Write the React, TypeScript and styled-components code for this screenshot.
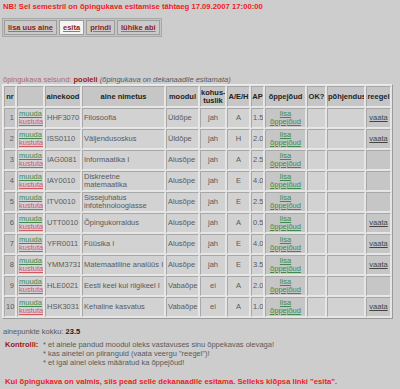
import React from 'react'
import styled, { createGlobalStyle } from 'styled-components'

const GlobalStyle = createGlobalStyle`
  html, body {
    margin: 0;
    padding: 0;
    background: #cdcdcd;
  }
  body {
    font-family: "Liberation Sans", Arial, sans-serif;
    font-size: 7.5px;
    color: #555;
  }
`

type Row = {
  nr: number
  kood: string
  nimi: React.ReactNode
  moodul: string
  kohus: string
  aeh: string
  ap: string
  reegel: boolean
}

const Rows: Row[] = [
  { nr: 1, kood: 'HHF3070', nimi: 'Filosoofia', moodul: 'Üldõpe', kohus: 'jah', aeh: 'A', ap: '1.5', reegel: true },
  { nr: 2, kood: 'ISS0110', nimi: 'Väljendusoskus', moodul: 'Üldõpe', kohus: 'jah', aeh: 'H', ap: '2.0', reegel: true },
  { nr: 3, kood: 'IAG0081', nimi: 'Informaatika I', moodul: 'Alusõpe', kohus: 'jah', aeh: 'A', ap: '2.5', reegel: false },
  { nr: 4, kood: 'IAY0010', nimi: <>Diskreetne<br />matemaatika</>, moodul: 'Alusõpe', kohus: 'jah', aeh: 'E', ap: '4.0', reegel: false },
  { nr: 5, kood: 'ITV0010', nimi: <>Sissejuhatus<br />infotehnoloogiasse</>, moodul: 'Alusõpe', kohus: 'jah', aeh: 'E', ap: '2.5', reegel: false },
  { nr: 6, kood: 'UTT0010', nimi: 'Õpingukorraldus', moodul: 'Alusõpe', kohus: 'jah', aeh: 'A', ap: '0.5', reegel: true },
  { nr: 7, kood: 'YFR0011', nimi: 'Füüsika I', moodul: 'Alusõpe', kohus: 'jah', aeh: 'E', ap: '4.0', reegel: true },
  { nr: 8, kood: 'YMM3731', nimi: 'Matemaatiline analüüs I', moodul: 'Alusõpe', kohus: 'jah', aeh: 'E', ap: '3.5', reegel: true },
  { nr: 9, kood: 'HLE0021', nimi: 'Eesti keel kui riigikeel I', moodul: 'Vabaõpe', kohus: 'ei', aeh: 'A', ap: '2.0', reegel: false },
  { nr: 10, kood: 'HSK3031', nimi: 'Kehaline kasvatus', moodul: 'Vabaõpe', kohus: 'ei', aeh: 'A', ap: '1.0', reegel: true }
]

// column widths (cell border boxes), spacing between them is 1px
const colWidths = [12, 27, 36, 83, 33, 26, 23, 13, 41, 19, 38, 25]

const App = () => {
  return (
    <Page>
      <GlobalStyle />
      <Deadline>NB! Sel semestril on õpingukava esitamise tähtaeg 17.09.2007 17:00:00</Deadline>
      <Toolbar>
        <ToolButton>lisa uus aine</ToolButton>
        <ToolButton active>esita</ToolButton>
        <ToolButton>prindi</ToolButton>
        <ToolButton>lühike abi</ToolButton>
      </Toolbar>
      <Status>
        <StatusLabel>õpingukava seisund:</StatusLabel> <StatusValue>pooleli</StatusValue>{' '}
        <StatusNote>(õpingukava on dekanaadile esitamata)</StatusNote>
      </Status>
      <PlanTable>
        <colgroup>
          {colWidths.map((w, i) => (
            <col key={i} style={{ width: w }} />
          ))}
        </colgroup>
        <thead>
          <tr>
            <Th>nr</Th>
            <Th></Th>
            <Th>ainekood</Th>
            <Th>aine nimetus</Th>
            <Th>moodul</Th>
            <Th>kohus-<br />tuslik</Th>
            <Th>A/E/H</Th>
            <Th>AP</Th>
            <Th>õppejõud</Th>
            <Th>OK?</Th>
            <Th>põhjendus</Th>
            <Th>reegel</Th>
          </tr>
        </thead>
        <tbody>
          {Rows.map((r) => (
            <tr key={r.nr}>
              <Td align="right" dark>{r.nr}</Td>
              <Td>
                <EditLink>muuda</EditLink>
                <br />
                <DeleteLink>kustuta</DeleteLink>
              </Td>
              <Td>{r.kood}</Td>
              <Td>{r.nimi}</Td>
              <Td>{r.moodul}</Td>
              <Td align="center">{r.kohus}</Td>
              <Td align="center">{r.aeh}</Td>
              <Td>{r.ap}</Td>
              <Td align="center" dark>
                <EditLink>lisa<br />õppejõud</EditLink>
              </Td>
              <Td></Td>
              <Td></Td>
              <Td align="center" dark>{r.reegel && <RuleLink>vaata</RuleLink>}</Td>
            </tr>
          ))}
        </tbody>
      </PlanTable>
      <Total>
        ainepunkte kokku: <b>23.5</b>
      </Total>
      <Checks>
        <CheckLabel>Kontrolli:</CheckLabel>
        <CheckList>
          <div>* et ainele pandud moodul oleks vastavuses sinu õppekavas olevaga!</div>
          <div>* kas ainetel on piiranguid (vaata veergu "reegel")!</div>
          <div>* et igal ainel oleks määratud ka õppejõud!</div>
        </CheckList>
      </Checks>
      <Final>Kui õpingukava on valmis, siis pead selle dekanaadile esitama. Selleks klõpsa linki "esita".</Final>
    </Page>
  )
}

export default App

const Page = styled.div`
  width: 400px;
  height: 389px;
  padding: 2px 2px 0 2px;
  box-sizing: border-box;
  overflow: hidden;
`
const Deadline = styled.div`
  color: #ee1c1c;
  font-weight: bold;
  font-size: 7.7px;
  line-height: 8px;
  padding-left: 1px;
  margin-top: 1px;
`
const Toolbar = styled.div`
  display: inline-flex;
  gap: 2px;
  margin-top: 7px;
  padding: 1px;
  border: 1px solid #a8a8a8;
  background: #c4c4c4;
`
const ToolButton = styled.a<{ active?: boolean }>`
  display: block;
  height: 13px;
  line-height: 13px;
  padding: 0 3px;
  border: 1px solid #9e9e9e;
  background: ${(p) => (p.active ? '#f4f4f4' : '#cacaca')};
  color: #8b1c1c;
  font-weight: bold;
  text-decoration: underline;
  text-decoration-color: #c86060;
`
const Status = styled.div`
  margin-top: 39px;
  line-height: 8px;
  padding-left: 1px;
`
const StatusLabel = styled.span`
  color: #b26a6a;
`
const StatusValue = styled.span`
  color: #9c1818;
  font-weight: bold;
`
const StatusNote = styled.span`
  color: #5a5a5a;
  font-style: italic;
`
const PlanTable = styled.table`
  width: 391px;
  box-sizing: border-box;
  table-layout: fixed;
  border-collapse: separate;
  border-spacing: 1px;
  margin-top: 0;
  background: #e4e4e4;
  border: 1px solid;
  border-color: #ececec #9a9a9a #9a9a9a #ececec;
`
const Th = styled.th`
  height: 19px;
  padding: 0;
  background: #c6c6c6;
  border: 1px solid;
  border-color: #a8a8a8 #e8e8e8 #e8e8e8 #a8a8a8;
  color: #222;
  font-weight: bold;
  line-height: 8px;
  text-align: center;
  white-space: nowrap;
  overflow: hidden;
`
const Td = styled.td<{ align?: string; dark?: boolean }>`
  height: 18px;
  padding: 0 1px;
  background: ${(p) => (p.dark ? '#c6c6c6' : '#d2d2d2')};
  border: 1px solid;
  border-color: #a8a8a8 #e8e8e8 #e8e8e8 #a8a8a8;
  text-align: ${(p) => p.align || 'left'};
  line-height: 8px;
  color: #5a5a5a;
  white-space: nowrap;
  overflow: hidden;
`
const EditLink = styled.a`
  color: #3f8a4c;
  text-decoration: underline;
`
const DeleteLink = styled.a`
  color: #d05a5a;
  text-decoration: underline;
`
const RuleLink = styled.a`
  color: #444;
  text-decoration: underline;
`
const Total = styled.div`
  margin-top: 9px;
  line-height: 8px;
  padding-left: 1px;
  color: #5a5a5a;
  b {
    color: #222;
  }
`
const Checks = styled.div`
  display: flex;
  margin-top: 4px;
  padding-left: 3px;
  line-height: 9px;
`
const CheckLabel = styled.div`
  width: 38px;
  color: #9c1818;
  font-weight: bold;
`
const CheckList = styled.div`
  color: #5a5a5a;
`
const Final = styled.div`
  margin-top: 11px;
  padding-left: 3px;
  color: #ee1c1c;
  font-weight: bold;
  font-size: 7.7px;
  line-height: 8px;
`
